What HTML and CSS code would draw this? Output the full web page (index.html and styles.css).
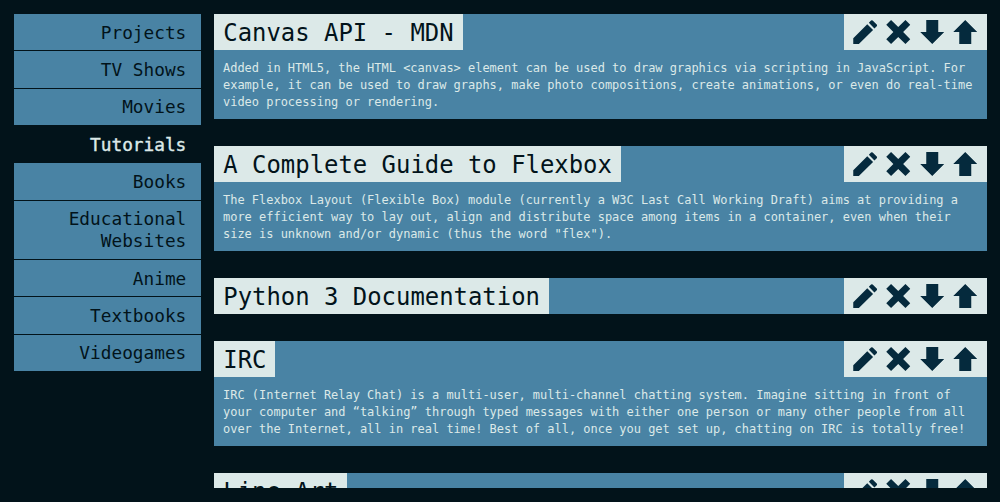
FILE: index.html
```html
<!DOCTYPE html>
<html lang="en">
<head>
<meta charset="utf-8">
<title>Bookmarks</title>
<link rel="stylesheet" href="styles.css">
</head>
<body>
<svg class="sprite" aria-hidden="true">
  <symbol id="edit" viewBox="0 0 24 24"><path d="M0 24V18.2L14 4.2L19.8 10L5.6 24ZM15.6 2.8L17.8.6Q18.6-.1 19.4.6L23.5 4.6Q24.2 5.4 23.5 6.2L21.2 8.4Z"/></symbol>
  <symbol id="remove" viewBox="0 0 24 24"><path d="M4.8 0L12 7L19.2 0L24 4.8L16.9 12L24 19.2L19.2 24L12 17L4.8 24L0 19.2L7.1 12L0 4.8Z"/></symbol>
  <symbol id="down" viewBox="0 0 24 24"><path d="M6 0H18V12H24L12 24L0 12H6Z"/></symbol>
  <symbol id="up" viewBox="0 0 24 24"><path d="M12 0L24 12H18V24H6V12H0Z"/></symbol>
</svg>
<div class="layout">
  <nav class="menu">
    <a class="menu-item">Projects</a>
    <a class="menu-item">TV Shows</a>
    <a class="menu-item">Movies</a>
    <a class="menu-item active">Tutorials</a>
    <a class="menu-item">Books</a>
    <a class="menu-item">Educational Websites</a>
    <a class="menu-item">Anime</a>
    <a class="menu-item">Textbooks</a>
    <a class="menu-item">Videogames</a>
  </nav>
  <main class="list">
    <article class="card">
      <header class="card-head"><h2 class="title">Canvas API - MDN</h2>
        <div class="actions"><svg><use href="#edit"/></svg><svg><use href="#remove"/></svg><svg><use href="#down"/></svg><svg><use href="#up"/></svg></div></header>
      <p class="text">Added in HTML5, the HTML &lt;canvas&gt; element can be used to draw graphics via scripting in JavaScript. For example, it can be used to draw graphs, make photo compositions, create animations, or even do real-time video processing or rendering.</p>
    </article>
    <article class="card">
      <header class="card-head"><h2 class="title">A Complete Guide to Flexbox</h2>
        <div class="actions"><svg><use href="#edit"/></svg><svg><use href="#remove"/></svg><svg><use href="#down"/></svg><svg><use href="#up"/></svg></div></header>
      <p class="text">The Flexbox Layout (Flexible Box) module (currently a W3C Last Call Working Draft) aims at providing a more efficient way to lay out, align and distribute space among items in a container, even when their size is unknown and/or dynamic (thus the word "flex").</p>
    </article>
    <article class="card">
      <header class="card-head"><h2 class="title">Python 3 Documentation</h2>
        <div class="actions"><svg><use href="#edit"/></svg><svg><use href="#remove"/></svg><svg><use href="#down"/></svg><svg><use href="#up"/></svg></div></header>
    </article>
    <article class="card">
      <header class="card-head"><h2 class="title">IRC</h2>
        <div class="actions"><svg><use href="#edit"/></svg><svg><use href="#remove"/></svg><svg><use href="#down"/></svg><svg><use href="#up"/></svg></div></header>
      <p class="text">IRC (Internet Relay Chat) is a multi-user, multi-channel chatting system. Imagine sitting in front of your computer and “talking” through typed messages with either one person or many other people from all over the Internet, all in real time! Best of all, once you get set up, chatting on IRC is totally free!</p>
    </article>
    <article class="card">
      <header class="card-head"><h2 class="title">Line Art</h2>
        <div class="actions"><svg><use href="#edit"/></svg><svg><use href="#remove"/></svg><svg><use href="#down"/></svg><svg><use href="#up"/></svg></div></header>
    </article>
  </main>
</div>
</body>
</html>
```
FILE: styles.css
```css
* { box-sizing: border-box; }
body {
  margin: 0;
  height: 502px;
  overflow: hidden;
  background: #02131a;
  color: #02131a;
  font-family: "DejaVu Sans Mono", monospace;
}
.sprite { display: none; }
.layout {
  display: flex;
  align-items: flex-start;
  gap: 13px;
  height: 502px;
  padding: 14px 13px 14px 14px;
}
.menu { flex: none; width: 187px; }
.menu-item {
  display: block;
  padding: 7.6px 14.7px 6.75px 30px;
  border-bottom: 1px solid #02131a;
  background: #4983a4;
  font-size: 17.78px;
  line-height: 22px;
  text-align: right;
}
.menu-item.active {
  background: none;
  color: #dce9e8;
  -webkit-text-stroke: 0.4px #dce9e8;
}
.list {
  flex: 1;
  display: flex;
  flex-direction: column;
  gap: 27px;
  height: 474px;
  overflow: hidden;
}
.card { flex: none; background: #4983a4; }
.card-head {
  display: flex;
  justify-content: space-between;
  height: 36px;
}
.title {
  margin: 0;
  padding: 1px 9px 0 9.3px;
  background: #dce9e8;
  font-size: 23.91px;
  font-weight: 400;
  line-height: 36px;
  height: 36px;
}
.actions {
  display: flex;
  align-items: center;
  justify-content: space-between;
  width: 143px;
  padding: 0 9px 0 8.5px;
  background: #dce9e8;
}
.actions svg {
  width: 24.5px;
  height: 24px;
  fill: #052a3d;
}
.text {
  margin: 0;
  padding: 10px 9px 8px;
  color: #dce9e8;
  font-size: 11.97px;
  line-height: 17px;
}
```
